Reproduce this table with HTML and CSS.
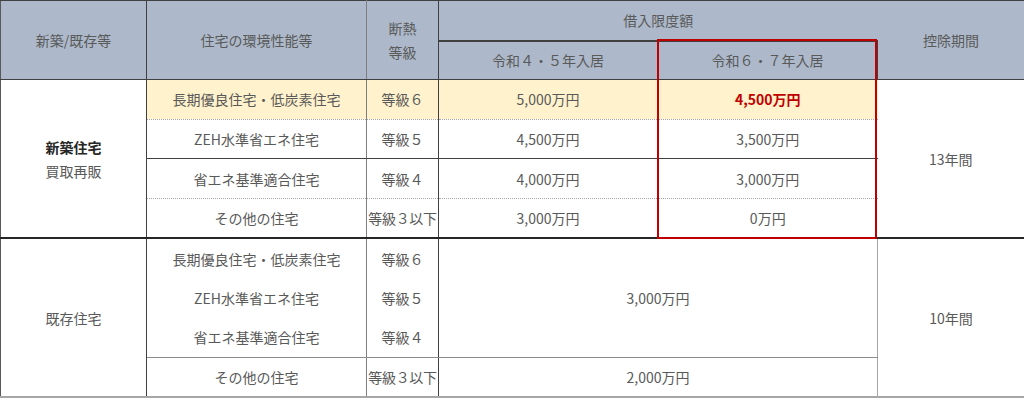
FILE: index.html
```html
<!DOCTYPE html>
<html lang="ja">
<head>
<meta charset="utf-8">
<title>住宅ローン控除 借入限度額</title>
<link rel="stylesheet" href="styles.css">
</head>
<body>
<div class="wrap">
<table class="loan">
  <colgroup>
    <col class="w-cat">
    <col class="w-perf">
    <col class="w-grade">
    <col class="w-amt">
    <col class="w-amt2">
    <col class="w-term">
  </colgroup>
  <thead>
    <tr class="h1">
      <th rowspan="2" class="b-right-dark">新築/既存等</th>
      <th rowspan="2" class="b-right-mid">住宅の環境性能等</th>
      <th rowspan="2" class="two-line b-right-dark">断熱<br>等級</th>
      <th colspan="2" class="group">借入限度額</th>
      <th rowspan="2" class="b-right-outer">控除期間</th>
    </tr>
    <tr class="h2">
      <th class="sub">令和４・５年入居</th>
      <th class="sub">令和６・７年入居</th>
    </tr>
  </thead>
  <tbody class="new">
    <tr class="hl">
      <td rowspan="4" class="cat b-right-dark"><strong>新築住宅</strong><br>買取再販</td>
      <td class="b-right-mid dot-bottom">長期優良住宅・低炭素住宅</td>
      <td class="b-right-dark dot-bottom">等級６</td>
      <td class="dot-bottom b-right-dark">5,000万円</td>
      <td class="dot-bottom emph">4,500万円</td>
      <td rowspan="4" class="b-right-outer">13年間</td>
    </tr>
    <tr>
      <td class="b-right-mid solid-bottom">ZEH水準省エネ住宅</td>
      <td class="b-right-dark solid-bottom">等級５</td>
      <td class="solid-bottom b-right-dark">4,500万円</td>
      <td class="solid-bottom">3,500万円</td>
    </tr>
    <tr>
      <td class="b-right-mid dot-bottom">省エネ基準適合住宅</td>
      <td class="b-right-dark dot-bottom">等級４</td>
      <td class="dot-bottom b-right-dark">4,000万円</td>
      <td class="dot-bottom">3,000万円</td>
    </tr>
    <tr class="last">
      <td class="b-right-mid">その他の住宅</td>
      <td class="b-right-dark small">等級３以下</td>
      <td class="b-right-dark">3,000万円</td>
      <td>0万円</td>
    </tr>
  </tbody>
  <tbody class="old">
    <tr>
      <td rowspan="4" class="b-right-dark">既存住宅</td>
      <td class="b-right-mid">長期優良住宅・低炭素住宅</td>
      <td class="b-right-dark">等級６</td>
      <td rowspan="3" colspan="2" class="gray-bottom">3,000万円</td>
      <td rowspan="4" class="b-left-light b-right-outer">10年間</td>
    </tr>
    <tr>
      <td class="b-right-mid">ZEH水準省エネ住宅</td>
      <td class="b-right-dark">等級５</td>
    </tr>
    <tr>
      <td class="b-right-mid gray-bottom">省エネ基準適合住宅</td>
      <td class="b-right-dark gray-bottom">等級４</td>
    </tr>
    <tr>
      <td class="b-right-mid">その他の住宅</td>
      <td class="b-right-dark small">等級３以下</td>
      <td colspan="2">2,000万円</td>
    </tr>
  </tbody>
</table>
<div class="frame" aria-hidden="true"></div>
</div>
</body>
</html>
```

FILE: styles.css
```css
html, body {
  margin: 0;
  padding: 0;
  background: #ffffff;
}

body {
  font-family: "Noto Sans CJK JP", "Noto Sans", sans-serif;
  font-size: 14px;
  color: #595959;
}

.wrap {
  position: relative;
  width: 1024px;
}

.loan {
  border-collapse: collapse;
  table-layout: fixed;
  width: 1024px;
  border-top: 1px solid #404040;
  border-left: 1px solid #595959;
  border-bottom: 2px solid #a6a6a6;
}

.w-cat { width: 146px; }
.w-perf { width: 220px; }
.w-grade { width: 72px; }
.w-amt { width: 219px; }
.w-amt2 { width: 220px; }
.w-term { width: 147px; }

th, td {
  padding: 0;
  text-align: center;
  vertical-align: middle;
  font-weight: normal;
  line-height: 24px;
  white-space: nowrap;
}

thead th {
  background: #adb9ca;
  border-bottom: 1px solid #404040;
}

.h1 { height: 40px; }
.h2 { height: 39px; }

thead .group {
  border-bottom: 2px solid #404040;
}

thead .sub {
  border-right: 1px solid #404040;
}

tbody tr { height: 39.7px; }

.hl td:not(.cat):not(.b-right-outer) {
  background: #fff2cc;
}

.b-right-dark { border-right: 1px solid #404040; }
.b-right-mid { border-right: 1px solid #7f7f7f; }
.b-right-outer { border-right: 1px solid #9a9a9a; }
.b-left-light { border-left: 1px solid #a6a6a6; }

.dot-bottom { border-bottom: 1px dotted #a6a6a6; }
.solid-bottom { border-bottom: 1px solid #404040; }
.gray-bottom { border-bottom: 1px solid #8c8c8c; }

.new tr.last td,
.new td[rowspan] {
  border-bottom: 2px solid #262626;
}

.emph {
  color: #c00000;
  font-weight: bold;
}

.cat strong {
  color: #262626;
  font-weight: bold;
}

.small { letter-spacing: -0.3px; }

/* red highlight frame over the 令和６・７年入居 column */
.frame {
  position: absolute;
  left: 657px;
  top: 39px;
  width: 220px;
  height: 200px;
  box-sizing: border-box;
  border: 2px solid #c00000;
  pointer-events: none;
}
```
